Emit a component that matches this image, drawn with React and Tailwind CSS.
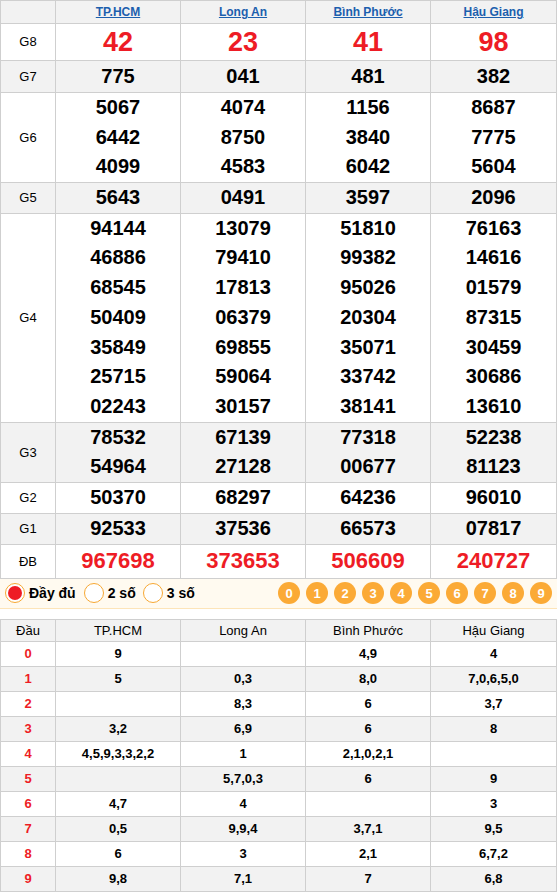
const provinces = ["TP.HCM", "Long An", "Bình Phước", "Hậu Giang"];

const prizes = [
	{ name: "G8", h: "h-[37px]", values: [["42"], ["23"], ["41"], ["98"]], kind: "g8" },
	{ name: "G7", h: "h-[32px]", values: [["775"], ["041"], ["481"], ["382"]] },
	{
		name: "G6",
		h: "h-[90px]",
		values: [
			["5067", "6442", "4099"],
			["4074", "8750", "4583"],
			["1156", "3840", "6042"],
			["8687", "7775", "5604"],
		],
	},
	{ name: "G5", h: "h-[30px]", values: [["5643"], ["0491"], ["3597"], ["2096"]] },
	{
		name: "G4",
		h: "h-[208px]",
		values: [
			["94144", "46886", "68545", "50409", "35849", "25715", "02243"],
			["13079", "79410", "17813", "06379", "69855", "59064", "30157"],
			["51810", "99382", "95026", "20304", "35071", "33742", "38141"],
			["76163", "14616", "01579", "87315", "30459", "30686", "13610"],
		],
	},
	{
		name: "G3",
		h: "h-[60px]",
		values: [
			["78532", "54964"],
			["67139", "27128"],
			["77318", "00677"],
			["52238", "81123"],
		],
	},
	{ name: "G2", h: "h-[31px]", values: [["50370"], ["68297"], ["64236"], ["96010"]] },
	{ name: "G1", h: "h-[31px]", values: [["92533"], ["37536"], ["66573"], ["07817"]] },
	{ name: "ĐB", h: "h-[34px]", values: [["967698"], ["373653"], ["506609"], ["240727"]], kind: "db" },
];

const heads = [
	["9", "", "4,9", "4"],
	["5", "0,3", "8,0", "7,0,6,5,0"],
	["", "8,3", "6", "3,7"],
	["3,2", "6,9", "6", "8"],
	["4,5,9,3,3,2,2", "1", "2,1,0,2,1", ""],
	["", "5,7,0,3", "6", "9"],
	["4,7", "4", "", "3"],
	["0,5", "9,9,4", "3,7,1", "9,5"],
	["6", "3", "2,1", "6,7,2"],
	["9,8", "7,1", "7", "6,8"],
];

function Cols() {
	return (
		<colgroup>
			<col className="w-[55px]" />
			<col className="w-[125px]" />
			<col className="w-[125px]" />
			<col className="w-[125px]" />
			<col className="w-[126px]" />
		</colgroup>
	);
}

function PrizeCell({ lines, kind }) {
	if (kind === "g8") {
		return <div className="h-[34px] text-[27px] leading-[34px] font-bold text-[#ee1c25]">{lines[0]}</div>;
	}
	if (kind === "db") {
		return <div className="h-[30px] text-[22px] leading-[30px] font-bold text-[#ee1c25]">{lines[0]}</div>;
	}
	return (
		<div>
			{lines.map((n) => (
				<div key={n} className="h-[29.7px] text-[20px] leading-[29.7px] font-bold text-black">
					{n}
				</div>
			))}
		</div>
	);
}

function Filter() {
	return (
		<div className="flex h-[30px] items-center justify-between border-b border-[#fde4b8] bg-[#fffaf0] pl-[5px] pr-[5px]">
			<div className="flex items-center text-[14px] font-bold text-black">
				<span className="flex h-[20px] w-[20px] items-center justify-center rounded-full border border-[#f7a833] bg-white">
					<span className="h-[14px] w-[14px] rounded-full bg-[#ee1c25]" />
				</span>
				<span className="ml-[4px] mr-[8px]">Đầy đủ</span>
				<span className="h-[20px] w-[20px] rounded-full border border-[#f7a833] bg-white" />
				<span className="ml-[4px] mr-[7px]">2 số</span>
				<span className="h-[20px] w-[20px] rounded-full border border-[#f7a833] bg-white" />
				<span className="ml-[4px]">3 số</span>
			</div>
			<div className="flex gap-[6px]">
				{["0", "1", "2", "3", "4", "5", "6", "7", "8", "9"].map((d) => (
					<span
						key={d}
						className="flex h-[22px] w-[22px] items-center justify-center rounded-full bg-[#fbaa36] text-[13px] font-bold text-white"
					>
						{d}
					</span>
				))}
			</div>
		</div>
	);
}

export default function App() {
	return (
		<div className="w-[557px] bg-white font-['Liberation_Sans',Arial,sans-serif]">
			<table className="w-[556px] table-fixed border-collapse text-center">
				<Cols />
				<thead>
					<tr className="h-[23px] bg-[#f2f2f2]">
						<th className="border border-[#cfcfcf] p-0" />
						{provinces.map((p) => (
							<th key={p} className="border border-[#cfcfcf] p-0 text-[12px] leading-[14px] font-bold">
								<a href="#" className="text-[#1c5fae] underline">
									{p}
								</a>
							</th>
						))}
					</tr>
				</thead>
				<tbody>
					{prizes.map((row, i) => (
						<tr key={row.name} className={(i % 2 === 1 ? "bg-[#f2f2f2] " : "bg-white ") + row.h}>
							<td className="border border-[#cfcfcf] p-0 text-[13px] text-black">{row.name}</td>
							{row.values.map((lines, j) => (
								<td key={j} className="border border-[#cfcfcf] p-0">
									<PrizeCell lines={lines} kind={row.kind} />
								</td>
							))}
						</tr>
					))}
				</tbody>
			</table>

			<Filter />

			<table className="mt-[10px] w-[556px] table-fixed border-collapse text-center text-[13px]">
				<Cols />
				<thead>
					<tr className="h-[22px] bg-[#f2f2f2]">
						<th className="border border-[#cfcfcf] p-0 leading-[15px] font-normal text-black">Đầu</th>
						{provinces.map((p) => (
							<th key={p} className="border border-[#cfcfcf] p-0 leading-[15px] font-normal text-black">
								{p}
							</th>
						))}
					</tr>
				</thead>
				<tbody>
					{heads.map((row, i) => (
						<tr key={i} className={i % 2 === 1 ? "h-[25px] bg-[#f2f2f2]" : "h-[25px] bg-white"}>
							<td className="border border-[#cfcfcf] p-0 font-bold text-[#ee1c25]">{i}</td>
							{row.map((v, j) => (
								<td key={j} className="border border-[#cfcfcf] p-0 font-bold text-black">
									{v}
								</td>
							))}
						</tr>
					))}
				</tbody>
			</table>
		</div>
	);
}
